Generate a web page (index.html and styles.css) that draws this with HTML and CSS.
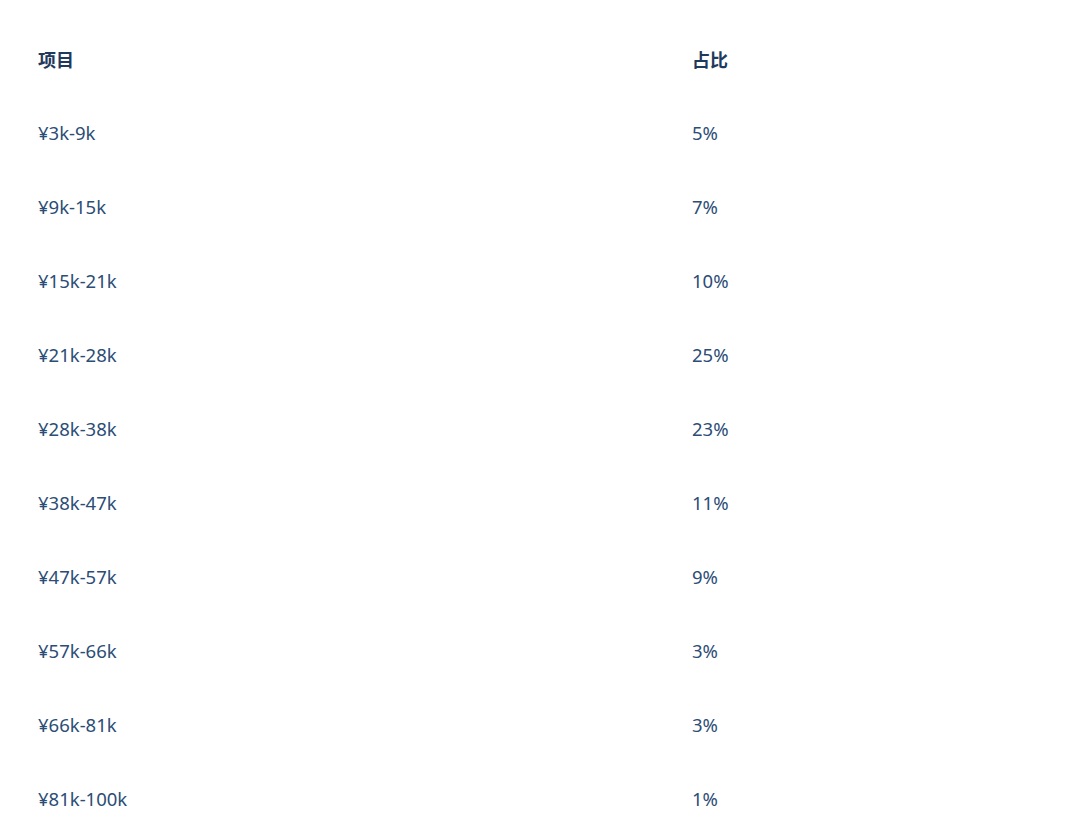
FILE: index.html
```html
<!DOCTYPE html>
<html lang="zh">
<head>
<meta charset="utf-8">
<link rel="stylesheet" href="styles.css">
</head>
<body>
<div class="wrap">
<table class="tbl">
<thead>
<tr><th class="c1">项目</th><th class="c2">占比</th></tr>
</thead>
<tbody>
<tr><td>¥3k-9k</td><td>5%</td></tr>
<tr><td>¥9k-15k</td><td>7%</td></tr>
<tr><td>¥15k-21k</td><td>10%</td></tr>
<tr><td>¥21k-28k</td><td>25%</td></tr>
<tr><td>¥28k-38k</td><td>23%</td></tr>
<tr><td>¥38k-47k</td><td>11%</td></tr>
<tr><td>¥47k-57k</td><td>9%</td></tr>
<tr><td>¥57k-66k</td><td>3%</td></tr>
<tr><td>¥66k-81k</td><td>3%</td></tr>
<tr><td>¥81k-100k</td><td>1%</td></tr>
</tbody>
</table>
</div>
</body>
</html>
```
FILE: styles.css
```css
html, body {
  margin: 0;
  padding: 0;
  background: #ffffff;
}
.wrap {
  padding: 22px 30px 0 30px;
}
.tbl {
  width: 100%;
  border-collapse: collapse;
  font-family: "Noto Sans", "Noto Sans CJK SC", sans-serif;
  font-size: 18.5px;
  color: #2b4d76;
}
.tbl th, .tbl td {
  text-align: left;
  padding: 0 8px;
  height: 74px;
  line-height: 26px;
  vertical-align: middle;
}
.tbl thead th {
  font-size: 18px;
  font-weight: 700;
  color: #1f3a5c;
  font-family: "Noto Sans CJK SC", sans-serif;
}
.c1 {
  width: 638px;
}
```
